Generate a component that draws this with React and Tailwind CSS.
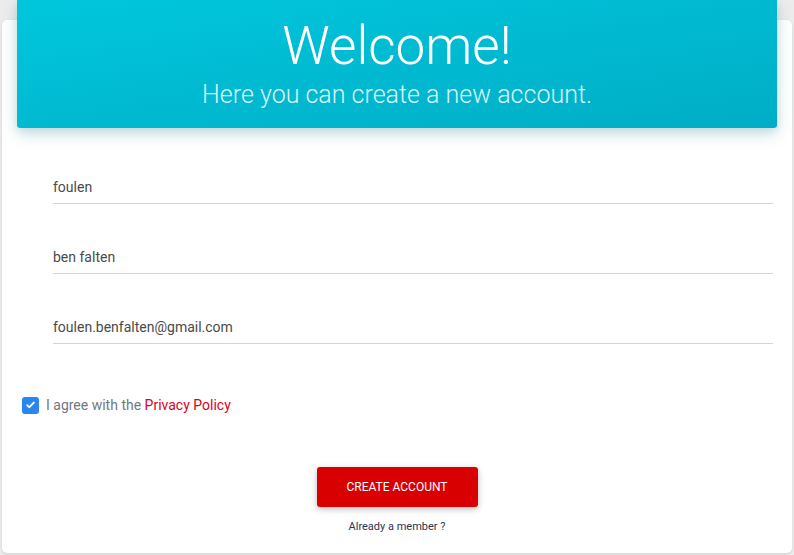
export default function App() {
  const fields = ["foulen", "ben falten", "foulen.benfalten@gmail.com"];
  return (
    <div
      className="w-[794px] h-[555px] overflow-hidden bg-[#ececec]"
      style={{ fontFamily: "Roboto, 'Liberation Sans', sans-serif" }}
    >
      <div className="ml-[2px] mt-[20px] w-[790px] h-[533px] rounded-[5px] bg-white shadow-[0_1px_3px_rgba(0,0,0,0.12)] flex flex-col">
        <div className="-mt-[20px] mx-[15px] h-[128px] rounded-b-[3px] bg-gradient-to-br from-[#00c7dd] to-[#00adc6] shadow-[0_6px_16px_rgba(0,130,150,0.22),0_3px_8px_rgba(0,0,0,0.08)] flex flex-col items-center text-white">
          <h1 className="mt-[14px] text-[53px] leading-[64px] font-light">Welcome!</h1>
          <p className="mt-[1px] text-[25px] leading-[32px] font-light text-[#d9f7fb]">
            Here you can create a new account.
          </p>
        </div>

        <div className="mt-[6px] pl-[51px] pr-[19px] flex flex-col">
          {fields.map((f) => (
            <div key={f} className="pt-[43px] pb-[6px] border-b border-[#d4d4d4]">
              <div className="text-[14px] leading-[20px] text-[#4a4a4a]">{f}</div>
            </div>
          ))}
        </div>

        <div className="mt-[51px] pl-[20px] flex items-center h-[20px]">
          <div className="w-[17px] h-[17px] rounded-[3px] bg-[#2a85f0] flex items-center justify-center">
            <svg width="9" height="8" viewBox="0 0 9 8">
              <path d="M1.2 4.2 L3.4 6.2 L7.8 1.6" stroke="white" strokeWidth="1.9" fill="none" strokeLinecap="round" strokeLinejoin="round" />
            </svg>
          </div>
          <span className="ml-[7px] text-[14px] leading-[20px] text-[#727880]">
            I agree with the <span className="text-[#e0001b]">Privacy Policy</span>
          </span>
        </div>

        <div className="mt-[52px] flex flex-col items-center">
          <button className="w-[161px] h-[40px] rounded-[3px] bg-[#d80000] text-white text-[12px] uppercase shadow-[0_2px_5px_rgba(0,0,0,0.16),0_2px_10px_rgba(0,0,0,0.12)]">
            Create account
          </button>
          <div className="mt-[12px] text-[11px] leading-[16px] text-[#2c3350]">Already a member ?</div>
        </div>
      </div>
    </div>
  );
}
